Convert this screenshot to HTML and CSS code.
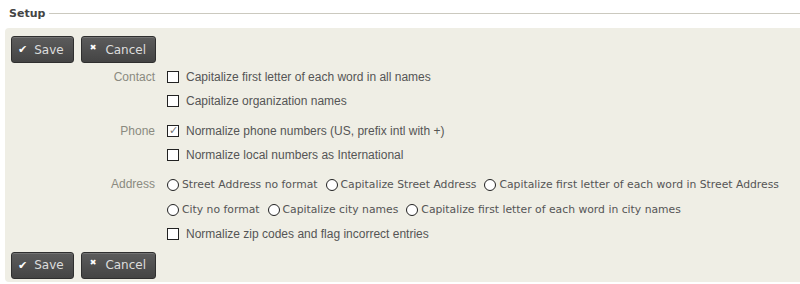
FILE: index.html
```html
<!DOCTYPE html>
<html lang="en">

<head>
    <meta charset="UTF-8">
    <title>Setup</title>
    <link rel="stylesheet" href="styles.css">
</head>

<body>
    <div class="setup">
        <div class="legend">
            <span class="legendText">Setup</span>
            <span class="legendLine"></span>
        </div>
        <div class="panel">
            <div class="actions">
                <button class="btn"><span class="ico">&#10004;</span>Save</button>
                <button class="btn"><span class="ico ico-x">&#10006;</span>Cancel</button>
            </div>

            <div class="group">
                <div class="label">Contact</div>
                <div class="opts">
                    <label class="row"><span class="box"></span>Capitalize first letter of each word in all names</label>
                    <label class="row"><span class="box"></span>Capitalize organization names</label>
                </div>
            </div>

            <div class="group">
                <div class="label">Phone</div>
                <div class="opts">
                    <label class="row"><span class="box checked">&#10003;</span>Normalize phone numbers (US, prefix intl with +)</label>
                    <label class="row"><span class="box"></span>Normalize local numbers as International</label>
                </div>
            </div>

            <div class="group">
                <div class="label">Address</div>
                <div class="opts">
                    <div class="row radios">
                        <label class="radio"><span class="dot"></span>Street Address no format</label>
                        <label class="radio"><span class="dot"></span>Capitalize Street Address</label>
                        <label class="radio"><span class="dot"></span>Capitalize first letter of each word in Street Address</label>
                    </div>
                    <div class="row radios">
                        <label class="radio"><span class="dot"></span>City no format</label>
                        <label class="radio"><span class="dot"></span>Capitalize city names</label>
                        <label class="radio"><span class="dot"></span>Capitalize first letter of each word in city names</label>
                    </div>
                    <label class="row"><span class="box"></span>Normalize zip codes and flag incorrect entries</label>
                </div>
            </div>

            <div class="actions bottom">
                <button class="btn"><span class="ico">&#10004;</span>Save</button>
                <button class="btn"><span class="ico ico-x">&#10006;</span>Cancel</button>
            </div>
        </div>
    </div>
</body>

</html>
```

FILE: styles.css
```css
* {
    margin: 0;
    padding: 0;
    box-sizing: border-box;
}

body {
    background-color: #ffffff;
    font-family: "Liberation Sans", Arial, sans-serif;
    font-size: 12px;
    color: #555555;
}

.setup {
    padding: 5px 0 0 5px;
}

.legend {
    display: flex;
    align-items: center;
    height: 17px;
    padding-left: 4px;
}

.legendText {
    font-family: "DejaVu Sans", sans-serif;
    font-weight: bold;
    font-size: 11px;
    color: #444444;
    margin-right: 4px;
}

.legendLine {
    flex: 1;
    height: 1px;
    background-color: #cbc9bf;
}

.panel {
    margin-top: 6px;
    background-color: #efeee5;
    border-radius: 4px 0 0 4px;
    padding: 8px 0 3px 6px;
}

.actions {
    display: flex;
    gap: 7px;
    margin-bottom: 2px;
}

.actions.bottom {
    margin-top: 4px;
    margin-bottom: 0;
}

.btn {
    display: flex;
    align-items: center;
    height: 27px;
    padding: 0 9px 0 6px;
    font-family: "DejaVu Sans", sans-serif;
    font-size: 12px;
    color: #dddddd;
    background: linear-gradient(#5c5c5c, #444444);
    border: 1px solid #2f2f2f;
    border-radius: 3px;
    box-shadow: inset 0 1px 0 rgba(255, 255, 255, 0.15);
}

.ico {
    font-size: 11px;
    color: #ffffff;
    margin-right: 7px;
}

.ico-x {
    font-size: 8px;
    margin: -5px 9px 0 2px;
}

.group {
    display: flex;
    margin-bottom: 5.5px;
}

.label {
    width: 150px;
    padding-right: 6px;
    text-align: right;
    line-height: 24px;
    color: #8a8a80;
}

.opts {
    display: flex;
    flex-direction: column;
    padding-left: 6px;
}

.row {
    display: flex;
    align-items: center;
    height: 24px;
}

.box {
    display: inline-flex;
    align-items: center;
    justify-content: center;
    width: 12px;
    height: 12px;
    background-color: #ffffff;
    border: 1px solid #222222;
    margin-right: 7px;
    font-size: 11px;
    color: #777777;
}

.radios {
    height: 25px;
    gap: 8px;
    font-family: "DejaVu Sans", sans-serif;
    font-size: 10.8px;
}

.radio {
    display: flex;
    align-items: center;
}

.dot {
    width: 12px;
    height: 12px;
    border: 1.5px solid #222222;
    border-radius: 50%;
    background-color: #ffffff;
    margin-right: 3px;
}
```
